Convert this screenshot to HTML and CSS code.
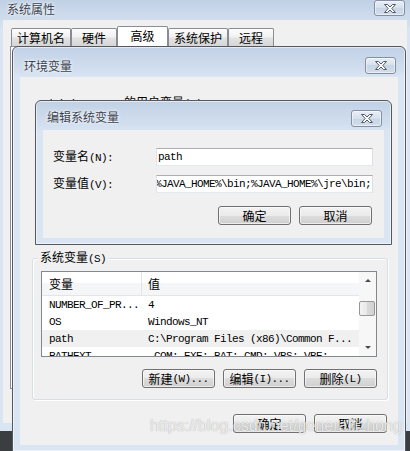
FILE: index.html
```html
<!DOCTYPE html>
<html lang="zh-CN">
<head>
<meta charset="utf-8">
<title>系统属性</title>
<link rel="stylesheet" href="styles.css">
</head>
<body>
<div class="win win-outer">
  <div class="titlebar tb-outer">
    <span class="title">系统属性</span>
    <span class="close close-outer"><svg width="12" height="9" viewBox="0 0 12 9"><polygon points="0.5,0.5 3.5,0.5 6,3 8.5,0.5 11.5,0.5 7.8,4.5 11.5,8.5 8.5,8.5 6,6 3.5,8.5 0.5,8.5 4.2,4.5" fill="#fff" stroke="#505a68" stroke-width="1" stroke-linejoin="round"/></svg></span>
  </div>
  <div class="client outer-client">
    <div class="tabs">
      <div class="tab">计算机名</div>
      <div class="tab">硬件</div>
      <div class="tab sel">高级</div>
      <div class="tab">系统保护</div>
      <div class="tab">远程</div>
    </div>
    <div class="pane"></div>
  </div>
</div>

<div class="win win-env">
  <div class="titlebar tb-env">
    <span class="title">环境变量</span>
    <span class="close"><svg width="12" height="9" viewBox="0 0 12 9"><polygon points="0.5,0.5 3.5,0.5 6,3 8.5,0.5 11.5,0.5 7.8,4.5 11.5,8.5 8.5,8.5 6,6 3.5,8.5 0.5,8.5 4.2,4.5" fill="#fff" stroke="#505a68" stroke-width="1" stroke-linejoin="round"/></svg></span>
  </div>
  <div class="client env-client">
    <div class="uvlabel"><span class="m">Administrator </span>的用户变量<span class="m">(U)</span></div>
    <div class="group">
      <div class="legend">系统变量<span class="m">(S)</span></div>
      <div class="list">
        <div class="lv">
          <div class="lhead"><span>变量</span><span>值</span></div>
          <div class="lrow"><span>NUMBER_OF_PR...</span><span>4</span></div>
          <div class="lrow"><span>OS</span><span>Windows_NT</span></div>
          <div class="lrow hot"><span>path</span><span>C:\Program Files (x86)\Common F...</span></div>
          <div class="lrow"><span>PATHEXT</span><span>.COM;.EXE;.BAT;.CMD;.VBS;.VBE;</span></div>
        </div>
        <div class="sb">
          <div class="sbtn"><svg width="6" height="3" viewBox="0 0 6 3"><polygon points="0,3 3,0 6,3" fill="#4a4a4a"/></svg></div>
          <div class="track"><div class="thumb"></div></div>
          <div class="sbtn"><svg width="6" height="3" viewBox="0 0 6 3"><polygon points="0,0 6,0 3,3" fill="#4a4a4a"/></svg></div>
        </div>
      </div>
      <div class="btnrow grp-btns">
        <div class="btn">新建<span class="m">(W)...</span></div>
        <div class="btn">编辑<span class="m">(I)...</span></div>
        <div class="btn">删除<span class="m">(L)</span></div>
      </div>
    </div>
    <div class="btnrow dlg-btns">
      <div class="btn">确定</div>
      <div class="btn">取消</div>
    </div>
  </div>
</div>

<div class="win win-edit">
  <div class="titlebar tb-edit">
    <span class="title">编辑系统变量</span>
    <span class="close"><svg width="12" height="9" viewBox="0 0 12 9"><polygon points="0.5,0.5 3.5,0.5 6,3 8.5,0.5 11.5,0.5 7.8,4.5 11.5,8.5 8.5,8.5 6,6 3.5,8.5 0.5,8.5 4.2,4.5" fill="#fff" stroke="#505a68" stroke-width="1" stroke-linejoin="round"/></svg></span>
  </div>
  <div class="client edit-client">
    <div class="frow"><label>变量名<span class="m">(N):</span></label><div class="input"><span class="m">path</span></div></div>
    <div class="frow"><label>变量值<span class="m">(V):</span></label><div class="input val"><span class="m">.;%JAVA_HOME%\bin;%JAVA_HOME%\jre\bin;</span></div></div>
    <div class="btnrow edit-btns">
      <div class="btn">确定</div>
      <div class="btn">取消</div>
    </div>
  </div>
</div>

<div class="watermark">https://blog.csdn.net/generallizhong</div>
</body>
</html>
```

FILE: styles.css
```css
* { box-sizing: border-box; }
html, body { margin: 0; padding: 0; }
body {
  position: relative;
  width: 410px;
  height: 451px;
  overflow: hidden;
  background: #3b3e41;
  font-family: "Noto Sans CJK SC", "Noto Sans CJK TC", sans-serif;
  font-size: 12px;
  line-height: 12px;
  color: #000;
}
.m {
  font-family: "Liberation Mono", "DejaVu Sans Mono", monospace;
  font-size: 11px;
  letter-spacing: -0.6px;
}

/* windows */
.win {
  position: absolute;
  display: flex;
  flex-direction: column;
  background: linear-gradient(180deg, #c1d1e5 0px, #d2dfef 24px, #d9e5f3 30px, #d9e5f3 100%);
}
.win-outer { left: 0; top: 0; width: 410px; height: 431px; padding: 0 3px 8px; z-index: 1; }
.win-env {
  left: 12px; top: 46px; width: 394px; height: 406px;
  padding: 0 7px 6px;
  border: 1px solid #55595f;
  border-radius: 6px 6px 0 0;
  box-shadow: inset 0 0 0 1px rgba(255,255,255,.55);
  z-index: 2;
}
.win-edit {
  left: 35px; top: 100px; width: 357px; height: 145px;
  padding: 0 7px 6px;
  border: 1px solid #55595f;
  border-radius: 6px 6px 0 0;
  box-shadow: inset 0 0 0 1px rgba(255,255,255,.55);
  z-index: 3;
}

.titlebar { display: flex; justify-content: space-between; align-items: flex-start; flex: none; padding: 0 2px 0 4px; }
.tb-outer { height: 20px; }
.tb-outer .title { margin-top: 3px; }
.tb-env { height: 30px; }
.tb-env .title { margin-top: 13px; }
.tb-env .close { margin-top: 10px; }
.tb-edit { height: 29px; }
.tb-edit .title { margin-top: 10px; }
.tb-edit .close { margin-top: 9px; }
.title {
  color: #39424f;
  line-height: 12px;
  text-shadow: 0 0 4px #fff, 0 0 2px #fff;
}
.close {
  width: 31px;
  height: 17px;
  border: 1px solid #8390a3;
  border-radius: 3px;
  background: linear-gradient(180deg, #e8eef6 0%, #d6e0ec 50%, #c8d5e5 50%, #d3deeb 100%);
  box-shadow: inset 0 0 0 1px rgba(255,255,255,.5);
  display: flex;
  align-items: center;
  justify-content: center;
}
.close-outer { height: 16px; }

.client { background: #f0f0f0; flex: none; }

/* outer window */
.outer-client { height: 403px; padding-top: 6px; display: flex; flex-direction: column; }
.tabs { display: flex; align-items: flex-end; height: 20px; margin-left: 8px; }
.tab {
  height: 18px;
  min-width: 46px;
  padding: 0 5px;
  border: 1px solid #898c95;
  border-bottom: 0;
  border-radius: 2px 2px 0 0;
  background: linear-gradient(180deg, #fdfdfd 0%, #f1f1f1 45%, #e2e2e2 55%, #d6d6d6 100%);
  display: flex;
  align-items: center;
  justify-content: center;
  white-space: nowrap;
}
.tab.sel {
  height: 21px;
  min-width: 51px;
  margin-bottom: -1px;
  padding-bottom: 3px;
  background: #fff;
  position: relative;
  z-index: 1;
}
.pane { height: 343px; margin: 0 7px; border: 1px solid #898c95; background: #fff; }

/* environment window */
.env-client { height: 368px; display: flex; flex-direction: column; align-items: flex-start; }
.uvlabel { margin: 19px 0 0 20px; white-space: nowrap; height: 12px; }
.group {
  margin: 150px 0 0 12px;
  width: 356px;
  border: 1px solid #d5dfe5;
  border-radius: 3px;
  padding: 0 10px 11px 8px;
  display: flex;
  flex-direction: column;
  box-shadow: inset 1px 1px 0 #fff, 1px 1px 0 #fff;
}
.legend {
  align-self: flex-start;
  margin: -8px 0 0 -3px;
  padding: 0 2px;
  height: 12px;
  background: #f0f0f0;
  white-space: nowrap;
}
.list { margin-top: 8px; height: 86px; border: 1px solid #828790; background: #fff; display: flex; }
.lv { flex: 1; overflow: hidden; }
.lhead {
  display: grid;
  grid-template-columns: 99px 1fr;
  height: 24px;
  border-bottom: 1px solid #e5e5e5;
  background: linear-gradient(180deg, #fff 0%, #fff 50%, #f5f6f7 50%, #f5f6f7 100%);
}
.lhead span { display: flex; align-items: center; padding-left: 7px; }
.lhead span + span { border-left: 1px solid #e5e5e5; padding-left: 6px; }
.lrow {
  display: grid;
  grid-template-columns: 99px 1fr;
  height: 17px;
  align-items: center;
  white-space: nowrap;
  font-family: "Liberation Mono", "DejaVu Sans Mono", monospace;
  font-size: 11px;
  letter-spacing: -0.6px;
}
.lrow span { padding-left: 7px; overflow: hidden; }
.lrow.hot { background: #f0f0f0; }

.sb { width: 17px; flex: none; background: #f7f7f7; display: flex; flex-direction: column; }
.sbtn { height: 17px; flex: none; display: flex; align-items: center; justify-content: center; }
.track { flex: 1; padding-top: 12px; }
.thumb {
  width: 16px;
  height: 15px;
  border: 1px solid #979797;
  border-radius: 2px;
  background: linear-gradient(90deg, #f3f3f3 0%, #e8e8e8 50%, #dadada 50%, #d2d2d2 100%);
}

/* buttons */
.btnrow { display: flex; justify-content: flex-end; gap: 8px; }
.btn {
  width: 73px;
  height: 19px;
  border: 1px solid #707070;
  border-radius: 3px;
  background: linear-gradient(180deg, #f2f2f2 0%, #ebebeb 50%, #dddddd 50%, #cfcfcf 100%);
  box-shadow: inset 0 0 0 1px rgba(255,255,255,.6);
  display: flex;
  align-items: center;
  justify-content: center;
  white-space: nowrap;
}
.grp-btns { margin-top: 12px; }
.dlg-btns { margin-top: 14px; margin-right: 11px; align-self: flex-end; }

/* edit dialog */
.edit-client { height: 108px; padding: 18px 11px 0 10px; display: flex; flex-direction: column; }
.frow { display: flex; align-items: center; height: 18px; }
.frow + .frow { margin-top: 9px; }
.frow label { width: 103px; flex: none; white-space: nowrap; }
.input {
  width: 217px;
  height: 18px;
  border: 1px solid;
  border-color: #abadb3 #dbdfe6 #e3e9ef #e2e3ea;
  background: #fff;
  display: flex;
  align-items: center;
  padding: 0 1px;
  white-space: nowrap;
  overflow: hidden;
}
.input span { flex: none; }
.input.val { justify-content: flex-end; }
.edit-btns { margin-top: 13px; margin-right: 1px; }

.watermark {
  position: absolute;
  left: 150px;
  top: 418px;
  z-index: 5;
  font-family: "Liberation Sans", Arial, sans-serif;
  font-size: 16px;
  line-height: 16px;
  white-space: nowrap;
  color: rgba(255,255,255,.8);
  text-shadow: 0 0 1px rgba(80,80,80,.55);
}
```
